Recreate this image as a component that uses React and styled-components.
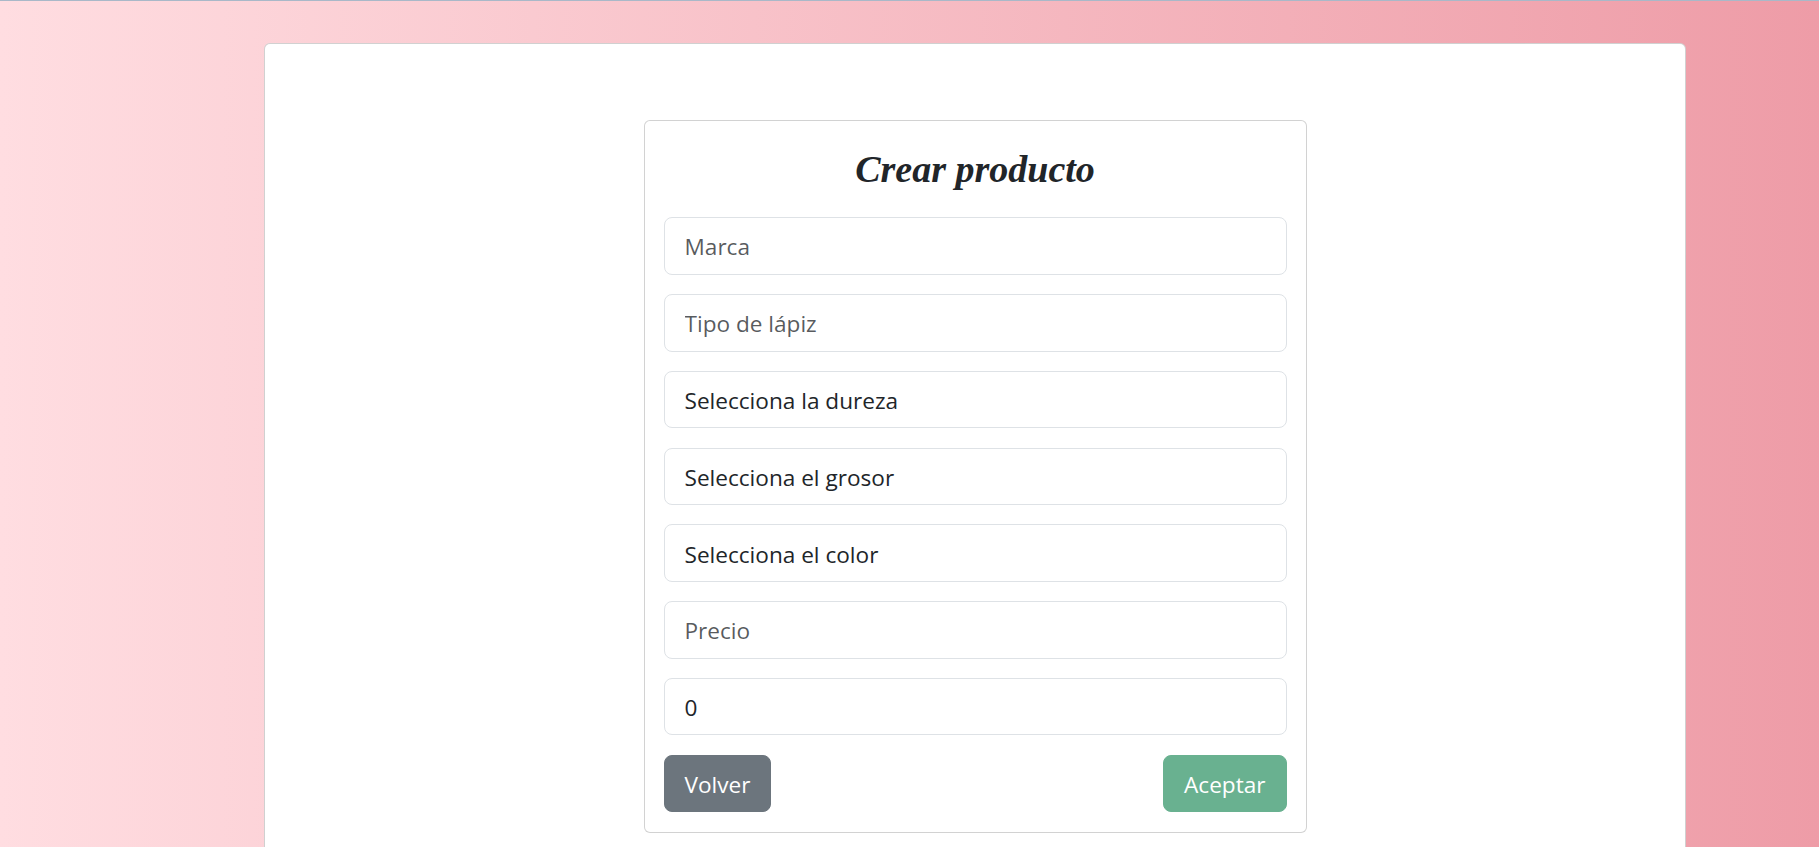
import React from "react";
import styled, { createGlobalStyle } from "styled-components";

const GlobalStyle = createGlobalStyle`
  html, body {
    margin: 0;
    height: 100%;
    overflow: hidden;
  }
  body {
    font-family: "Open Sans", "Noto Sans", sans-serif;
    color: #212529;
    background: linear-gradient(to right, #ffdde1, #ee9ca7);
    border-top: 1px solid #a9b8c8;
    box-sizing: border-box;
  }
  * {
    box-sizing: border-box;
  }
`;

const Page = styled.div`
  display: flex;
  padding: 42px 133px 0 264px;
  height: 846px;
`;

// white sheet that runs past the bottom of the window
const Panel = styled.div`
  flex: 1;
  display: flex;
  justify-content: center;
  align-items: flex-start;
  background: #fff;
  border: 1px solid rgba(0, 0, 0, 0.18);
  border-bottom: none;
  border-radius: 6px 6px 0 0;
  padding-top: 76px;
`;

const Card = styled.form`
  width: 663px;
  display: flex;
  flex-direction: column;
  gap: 19.2px;
  padding: 19.4px 19px;
  border: 1px solid rgba(0, 0, 0, 0.175);
  border-radius: 6px;
  background: #fff;
`;

const Title = styled.h2`
  margin: 7px 0 5px;
  font-family: "Liberation Serif", "Times New Roman", serif;
  font-style: italic;
  font-weight: 700;
  font-size: 38px;
  line-height: 1.2;
  text-align: center;
  color: #212529;
`;

const fieldStyles = `
  width: 100%;
  height: 57.6px;
  padding: 2px 20px 0;
  font-family: "Open Sans", "Noto Sans", sans-serif;
  font-size: 22.6px;
  color: #212529;
  background: #fff;
  border: 1px solid #dee2e6;
  border-radius: 8px;
  outline: none;
  appearance: none;
  -moz-appearance: textfield;
  margin: 0;

  &::placeholder {
    color: rgba(33, 37, 41, 0.75);
  }
  &::-webkit-inner-spin-button,
  &::-webkit-outer-spin-button {
    -webkit-appearance: none;
    margin: 0;
  }
`;

const Field = styled.input`
  ${fieldStyles}
`;

const Select = styled.select`
  ${fieldStyles}
`;

const Actions = styled.div`
  display: flex;
  justify-content: space-between;
`;

const Button = styled.button`
  height: 57.6px;
  padding: 2px 20px 0;
  font-family: "Open Sans", "Noto Sans", sans-serif;
  font-size: 22.6px;
  color: #fff;
  border: 1px solid ${(p) => p.$bg};
  background: ${(p) => p.$bg};
  border-radius: 8px;
  cursor: pointer;
`;

const selects = [
  "Selecciona la dureza",
  "Selecciona el grosor",
  "Selecciona el color",
];

export default function App() {
  return (
    <>
      <GlobalStyle />
      <Page>
        <Panel>
          <Card onSubmit={(e) => e.preventDefault()}>
            <Title>Crear producto</Title>
            <Field placeholder="Marca" />
            <Field placeholder="Tipo de lápiz" />
            {selects.map((label) => (
              <Select key={label} defaultValue="">
                <option value="">{label}</option>
              </Select>
            ))}
            <Field placeholder="Precio" />
            <Field type="number" defaultValue={0} />
            <Actions>
              <Button type="button" $bg="#6c757d">
                Volver
              </Button>
              <Button type="submit" $bg="#69b190" disabled>
                Aceptar
              </Button>
            </Actions>
          </Card>
        </Panel>
      </Page>
    </>
  );
}
